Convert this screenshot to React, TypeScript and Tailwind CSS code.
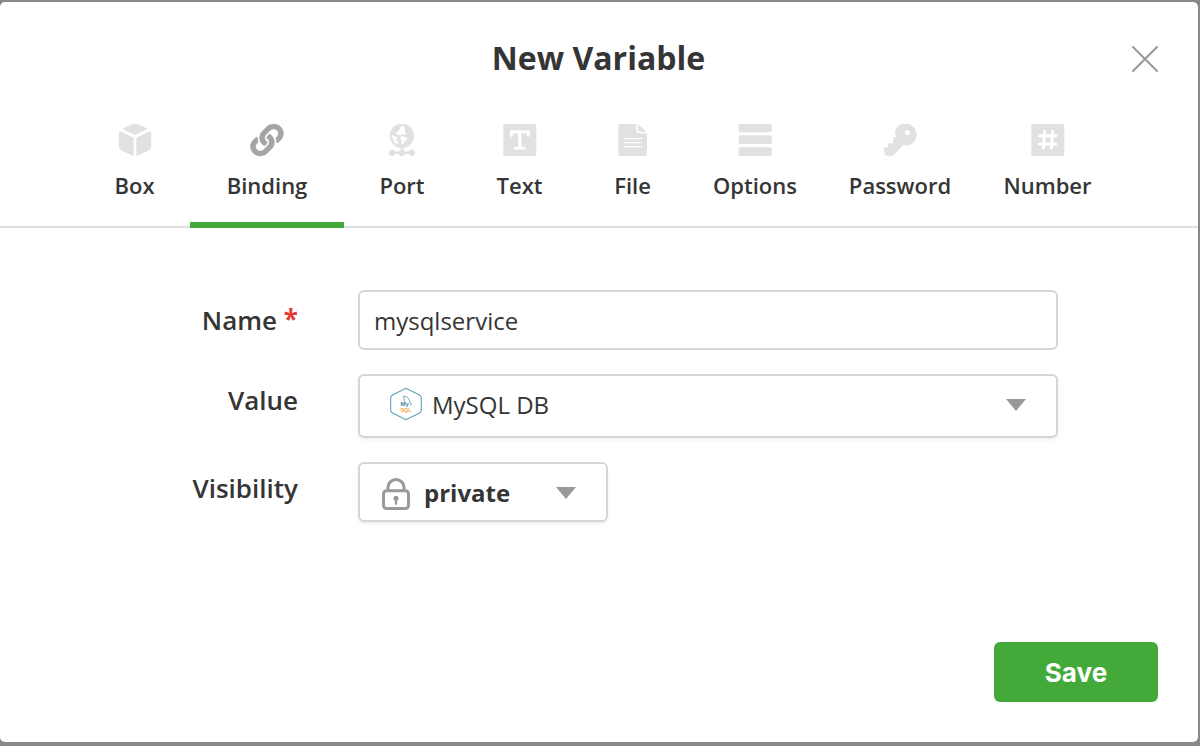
import type { ReactNode } from "react";

const box = (
  <svg viewBox="0 0 34 34" className="h-[34px] w-[34px]" fill="currentColor">
    <path d="M14.6 0H19.4L28.4 4Q29.4 4.7 28.4 5.4L18 10.7Q17 11.2 16 10.7L5.6 5.4Q4.6 4.7 5.6 4Z" />
    <path d="M2.6 7.2L15 13.4Q15.7 13.8 15.7 14.6V31.2Q15.7 32.2 14.6 31.8L4 26.8Q.8 25 .8 22V10Q.8 7.6 2.6 7.2Z" />
    <path d="M31.4 7.2L19 13.4Q18.3 13.8 18.3 14.6V31.2Q18.3 32.2 19.4 31.8L30 26.8Q33.2 25 33.2 22V10Q33.2 7.6 31.4 7.2Z" />
  </svg>
);

const link = (
  <svg viewBox="-8 0 528 544" preserveAspectRatio="none" className="h-[34px] w-[34px]" fill="currentColor" stroke="currentColor" strokeWidth="7">
    <path d="M326.612 185.391c59.747 59.809 58.927 155.698.36 214.59-.11.12-.24.25-.36.37l-67.2 67.2c-59.27 59.27-155.699 59.262-214.96 0-59.27-59.26-59.27-155.7 0-214.96l37.106-37.106c9.84-9.84 26.786-3.3 27.294 10.606.648 17.722 3.826 35.527 9.69 52.721 1.986 5.822.567 12.262-3.783 16.612l-13.087 13.087c-28.026 28.026-28.905 73.66-1.155 101.96 28.024 28.579 74.086 28.749 102.325.51l67.2-67.19c28.191-28.191 28.073-73.757 0-101.83-3.701-3.694-7.429-6.564-10.341-8.569a16.037 16.037 0 0 1-6.947-12.606c-.396-10.567 3.348-21.456 11.698-29.806l21.054-21.055c5.521-5.521 14.182-6.199 20.584-1.731a152.482 152.482 0 0 1 20.522 17.197zM467.547 44.449c-59.261-59.262-155.69-59.27-214.96 0l-67.2 67.2c-.12.12-.25.25-.36.37-58.566 58.892-59.387 154.781.36 214.59a152.454 152.454 0 0 0 20.521 17.196c6.402 4.468 15.064 3.789 20.584-1.731l21.054-21.055c8.35-8.35 12.094-19.239 11.698-29.806a16.037 16.037 0 0 0-6.947-12.606c-2.912-2.005-6.64-4.875-10.341-8.569-28.073-28.073-28.191-73.639 0-101.83l67.2-67.19c28.239-28.239 74.3-28.069 102.325.51 27.75 28.3 26.872 73.934-1.155 101.96l-13.087 13.087c-4.35 4.35-5.769 10.79-3.783 16.612 5.864 17.194 9.042 34.999 9.69 52.721.509 13.906 17.454 20.446 27.294 10.606l37.106-37.106c59.271-59.259 59.271-155.699.001-214.959z" />
  </svg>
);

const port = (
  <svg viewBox="0 0 34 34" className="h-[34px] w-[34px]" fill="currentColor">
    <circle cx="16.9" cy="11.8" r="12.2" />
    <g fill="white">
      <path d="M15.2 3.4L17 2.2L19.6 1.8L19 3.4L20.2 4.8L20 7L21 8.8L19.8 11L17.8 10L15.4 11.4L12 10.6L10.8 8.4L14 6.4Z" />
      <path d="M7.2 10.5L9.6 12.3L12.6 13.2L11.3 15.5L13 18.5L13.4 20.8Q8 18.2 7.2 13Z" />
      <path d="M14.5 13.2L18 12L20.2 13.4L22.6 14L20.6 16.6L17.8 20.4L16.2 19.4L16.6 16Z" />
    </g>
    <path d="M15.7 23.5h2.6v2l2 2h3.7a3.2 3.2 0 1 1 0 2.5h-3.9a3.4 3.4 0 0 1-6.4 0H9.9a3.2 3.2 0 1 1 0-2.5h3.8l2-2Z" />
  </svg>
);

const text = (
  <svg viewBox="0 0 34 34" className="h-[34px] w-[34px]" fill="currentColor">
    <rect x=".3" y="0" width="33" height="32" rx="1.5" />
    <g fill="none" stroke="white">
      <path d="M7 7.8H26.6" strokeWidth="3" />
      <path d="M8.3 8V11.6M25.3 8V11.6" strokeWidth="2.8" strokeLinecap="round" />
      <path d="M16.8 7.8V24" strokeWidth="3.4" />
      <path d="M12.2 24.2H21.4" strokeWidth="2.5" strokeLinecap="round" />
    </g>
  </svg>
);

const file = (
  <svg viewBox="0 0 34 34" className="h-[34px] w-[34px]" fill="currentColor">
    <path d="M5 0H20.3V6Q20.3 9.3 24 9.3H31V29.5Q31 32 28.5 32H5Q2.3 32 2.3 29.5V2.5Q2.3 0 5 0Z" />
    <path d="M22 0L30.4 7.8H24Q22 7.8 22 6Z" />
    <path d="M8.8 14.7H25.2M8.8 18.6H25.2M8.8 22.7H25.2" stroke="white" strokeWidth="1.3" strokeLinecap="round" />
  </svg>
);

const options = (
  <svg viewBox="0 0 34 34" className="h-[34px] w-[34px]" fill="currentColor">
    <path d="M.7 0H33.7V6.4Q33.7 8.2 32 8.2H2.4Q.7 8.2 .7 6.4Z" />
    <rect x=".7" y="11.3" width="33" height="8.8" rx="1.6" />
    <rect x=".7" y="23.2" width="33" height="8.8" rx="1.6" />
  </svg>
);

const password = (
  <svg viewBox="0 0 34 34" className="h-[34px] w-[34px]" fill="currentColor">
    <path
      fillRule="evenodd"
      d="M18.5 0H26Q33.7 3.3 33.7 10.8A11 11 0 0 1 22.7 21.6H20L10.2 31.6Q8.5 32.5 6 32L2.2 31.2Q1.4 29 1.1 24.2Q1 22.9 2.3 22.9L5 23.6Q6 22.7 5.1 20.3Q5 19 6.2 19.2L10 19.4Q10.8 18 10 16.2L11 13.5L12.8 12.8Q11.3 9 12.6 5.8Q14.3 1.4 18.5 0ZM24.5 6a2.6 2.6 0 1 0 0 5.2a2.6 2.6 0 0 0 0-5.2Z"
    />
  </svg>
);

const number = (
  <svg viewBox="0 0 34 34" className="h-[34px] w-[34px]" fill="currentColor">
    <rect x=".3" y="0" width="33" height="32" rx="1.5" />
    <path d="M13.6 7.5L12.4 24M21.6 7.5L20.4 24M8.8 11.8H25.2M8.4 19.9H24.8" fill="none" stroke="white" strokeWidth="3" strokeLinecap="round" />
  </svg>
);

function Tab({ icon, label, className = "" }: { icon: ReactNode; label: string; className?: string }) {
  return (
    <button className={`flex h-[112px] shrink-0 flex-col items-center pt-2.5 text-[#e1e1e1] ${className}`}>
      {icon}
      <span className="mt-[11px] text-[22px] leading-[32px] font-semibold whitespace-nowrap text-[#353535]">{label}</span>
    </button>
  );
}

function Caret() {
  return (
    <svg viewBox="0 0 20 12" className="h-3 w-5" fill="#999">
      <path d="M0 0H20L10 12Z" />
    </svg>
  );
}

function MySqlLogo() {
  return (
    <svg viewBox="0 0 32 32" className="h-8 w-8" fill="none">
      <path d="M14.5 .9Q16 .1 17.5 .9L29.5 7Q31.3 8 31.3 9.8V22.2Q31.3 24 29.5 25L17.5 31.1Q16 31.9 14.5 31.1L2.5 25Q.7 24 .7 22.2V9.8Q.7 8 2.5 7Z" stroke="#5fa5b8" strokeWidth="1.1" />
      <path d="M13.2 8.3Q17.8 8 19.2 12Q19.6 14 21.6 16.4L19.8 17.4M13.2 8.3Q14.6 10 14 12.4L15.6 14.6" stroke="#79acba" strokeWidth="1" />
      <g fontWeight="bold" className="font-['Liberation_Sans',sans-serif]">
        <text x="10.4" y="17.8" fill="#3b8299" fontSize="6">My</text>
        <text x="10.4" y="24.2" fill="#f7a13b" fontSize="5.4">SQL</text>
      </g>
    </svg>
  );
}

export default function App() {
  return (
    <div className="flex h-[746px] w-[1200px] flex-col bg-[#88888a] pt-0.5 pr-0.5 pb-1 font-['Open_Sans',sans-serif] text-[#353535]">
      <main className="flex h-[740px] w-[1198px] flex-col rounded-[5px] bg-white">
        <header className="grid h-[112px] shrink-0 grid-cols-[1fr_auto_1fr] items-center">
          <h1 className="col-start-2 pr-px text-[32px] leading-[44px] font-bold">New Variable</h1>
          <button aria-label="Close" className="mt-0.5 mr-10 justify-self-end">
            <svg viewBox="0 0 26 26" className="h-[26px] w-[26px]" fill="none" stroke="#999" strokeWidth="2" strokeLinecap="round">
              <path d="M1 1L25 25M25 1L1 25" />
            </svg>
          </button>
        </header>

        <nav className="flex h-[114px] shrink-0 border-b-2 border-[#dfdfdf] pl-[79px]">
          <Tab icon={box} label="Box" className="w-[111px]" />
          <button className="flex h-[114px] w-[154px] shrink-0 flex-col items-center border-b-[6px] border-[#43aa39] pt-2.5 text-[#a5a5a5]">
            {link}
            <span className="mt-[11px] text-[22px] leading-[32px] font-semibold text-[#353535]">Binding</span>
          </button>
          <Tab icon={port} label="Port" className="w-[116px]" />
          <Tab icon={text} label="Text" className="w-[119px]" />
          <Tab icon={file} label="File" className="w-[107px]" />
          <Tab icon={options} label="Options" className="w-[138px]" />
          <Tab icon={password} label="Password" className="w-[152px]" />
          <Tab icon={number} label="Number" className="w-[143px]" />
        </nav>

        <form className="flex flex-col gap-6 pt-[62px]" onSubmit={(e) => e.preventDefault()}>
          <div className="flex h-[60px]">
            <label className="mr-[60px] w-[298px] shrink-0 pt-3 text-right text-[26px] leading-[36px] font-semibold">
              Name <span className="inline-block -translate-y-px font-bold text-[#e53935]">*</span>
            </label>
            <input
              defaultValue="mysqlservice"
              className="h-[60px] w-[700px] rounded-md border-2 border-[#d5d5d5] bg-white px-[14px] text-2xl outline-none"
            />
          </div>
          <div className="flex h-16">
            <label className="mr-[60px] w-[298px] shrink-0 pt-2 text-right text-[26px] leading-[36px] font-semibold">Value</label>
            <div className="flex w-[700px] items-center rounded-md border-2 border-[#d5d5d5] px-[30px] shadow-[0_2px_3px_rgba(0,0,0,0.06)]">
              <div className="-mt-1"><MySqlLogo /></div>
              <span className="-mt-0.5 ml-2.5 text-2xl">MySQL DB</span>
              <div className="-mt-0.5 ml-auto"><Caret /></div>
            </div>
          </div>
          <div className="flex h-[60px]">
            <label className="mr-[60px] w-[298px] shrink-0 pt-2 text-right text-[26px] leading-[36px] font-semibold">Visibility</label>
            <div className="flex w-[250px] items-center rounded-md border-2 border-[#d5d5d5] pr-[30px] pl-[22px] shadow-[0_2px_3px_rgba(0,0,0,0.06)]">
              <svg viewBox="0 0 28 32" className="mt-1 h-8 w-7" fill="none" stroke="#999">
                <rect x="1.5" y="12.7" width="25" height="17.8" rx="3" strokeWidth="3" />
                <path d="M6 12.5V9.5A8 8 0 0 1 22 9.5V12.5" strokeWidth="3" />
                <circle cx="14" cy="20.3" r="2.5" fill="#999" stroke="none" />
                <path d="M14 21V25.8" strokeWidth="2.3" strokeLinecap="round" />
              </svg>
              <span className="mt-0.5 ml-3.5 text-2xl font-bold">private</span>
              <div className="mt-0.5 ml-auto"><Caret /></div>
            </div>
          </div>
        </form>

        <footer className="mt-auto flex justify-end pr-10 pb-10">
          <button className="h-[60px] w-[164px] rounded-md bg-[#43aa39] font-['Inter',sans-serif] text-[26px] font-bold text-white">Save</button>
        </footer>
      </main>
    </div>
  );
}
